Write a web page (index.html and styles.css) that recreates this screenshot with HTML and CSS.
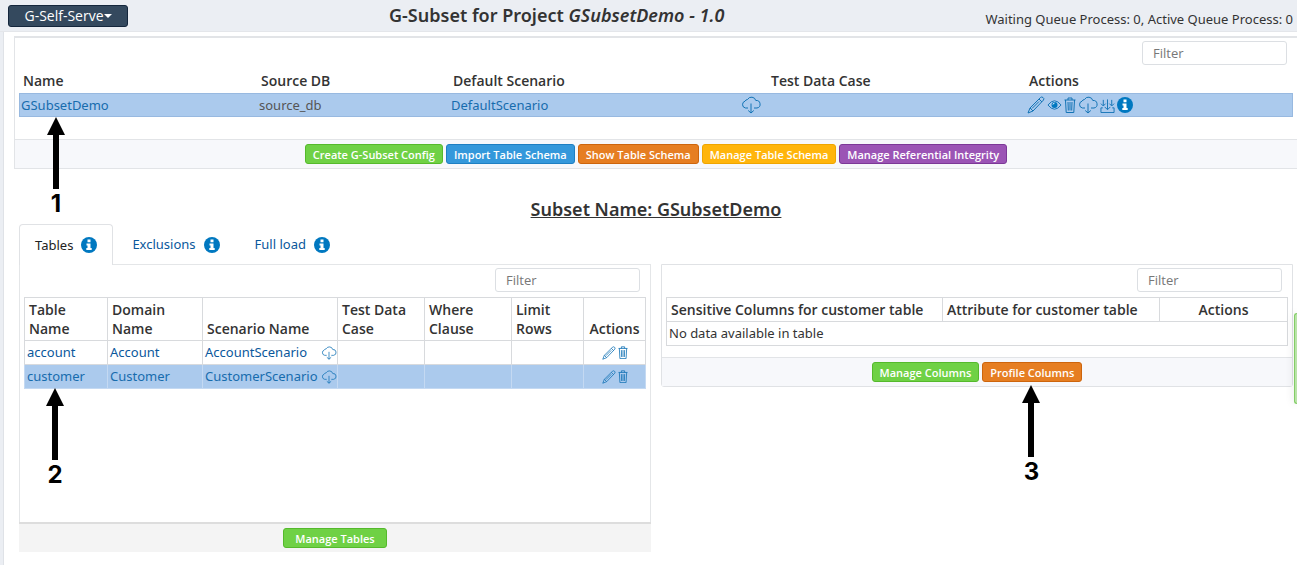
FILE: index.html
```html
<!DOCTYPE html>
<html lang="en">
<head>
    <meta charset="UTF-8">
    <meta name="viewport" content="width=device-width, initial-scale=1.0">
    <title>G-Subset</title>
    <link rel="stylesheet" href="styles.css">
</head>
<body>
    <!-- Icon sprite -->
    <svg class="sprite" aria-hidden="true">
        <symbol id="pen" viewBox="0 0 18 18">
            <path d="M1 17l2-5L13.500 1.500q1-1 2.500 0t.5 2.500L6 15zM3 12l3 3M12 3l3 3M5 12.500l7-7"/>
        </symbol>
        <symbol id="eye" viewBox="0 0 16 12">
            <path d="M1 6q7-9 14 0q-7 9-14 0z"/>
            <circle class="solid" cx="8" cy="6" r="3.200"/>
            <path class="shine" d="M6.300 5.500q.2-1.500 1.700-1.500"/>
        </symbol>
        <symbol id="trash" viewBox="0 0 12 16">
            <path d="M.5 3h11M4 3V1h4v2M1.500 3l.7 12.500h7.600L10.500 3M4 5l.3 8.500M6 5v8.500M8 5l-.3 8.500"/>
        </symbol>
        <symbol id="cloud" viewBox="0 0 20 18">
            <path d="M7 12H4.500A3.500 3.500 0 0 1 4 5.200 3 3 0 0 1 6.500 3.500 4.500 4.500 0 0 1 14.800 4.500a3.800 3.800 0 0 1 1.200 7.500H13M10 7.500V17M7.200 14.500L10 17l2.800-2.500"/>
        </symbol>
        <symbol id="tray" viewBox="0 0 16 16">
            <path d="M3 10.500H1v5h14v-5h-2M8 1.500V12M5 9.500L8 12.500l3-3M3.500 2v6M1 6l2.500 2.500L6 6M12.500 2v6M10 6l2.500 2.500L15 6"/>
        </symbol>
        <symbol id="info" viewBox="0 0 16 16">
            <circle class="solid" cx="8" cy="8" r="8"/>
            <path class="hole" d="M6.500 2.500h3v2.700h-3zM5.500 6.500h4v4.500h1.200v2H5.300v-2h1.200V8.400h-1z"/>
        </symbol>
    </svg>

    <header class="topbar">
        <button class="menu-btn" type="button">G-Self-Serve<span class="caret"></span></button>
        <h1>G-Subset for Project <em>GSubsetDemo - 1.0</em></h1>
        <span class="queue">Waiting Queue Process: 0, Active Queue Process: 0</span>
    </header>

    <main>
        <!-- Subset configs -->
        <section class="card">
            <div class="filter-row">
                <input class="filter" type="text" placeholder="Filter" aria-label="Filter configs">
            </div>
            <table class="configs">
                <thead>
                    <tr>
                        <th class="c-name">Name</th>
                        <th class="c-source">Source DB</th>
                        <th class="c-scenario">Default Scenario</th>
                        <th class="c-case">Test Data Case</th>
                        <th class="c-actions">Actions</th>
                    </tr>
                </thead>
                <tbody>
                    <tr class="selected">
                        <td>
                            <a class="marked" href="#">GSubsetDemo
                                <span class="marker"><svg viewBox="0 0 18 72"><path d="M9 0l9 18h-6v54H6V18H0z"/></svg>1</span>
                            </a>
                        </td>
                        <td>source_db</td>
                        <td><a href="#">DefaultScenario</a></td>
                        <td><a href="#" aria-label="Download case"><svg class="icon cloud"><use href="#cloud"/></svg></a></td>
                        <td>
                            <div class="icons">
                                <a href="#" aria-label="Edit"><svg class="icon pen"><use href="#pen"/></svg></a>
                                <a href="#" aria-label="View"><svg class="icon eye"><use href="#eye"/></svg></a>
                                <a href="#" aria-label="Delete"><svg class="icon trash"><use href="#trash"/></svg></a>
                                <a href="#" aria-label="Download"><svg class="icon cloud"><use href="#cloud"/></svg></a>
                                <a href="#" aria-label="Import"><svg class="icon tray"><use href="#tray"/></svg></a>
                                <a href="#" aria-label="Info"><svg class="icon info"><use href="#info"/></svg></a>
                            </div>
                        </td>
                    </tr>
                </tbody>
            </table>
            <div class="card-footer">
                <button class="btn green" type="button">Create G-Subset Config</button>
                <button class="btn blue" type="button">Import Table Schema</button>
                <button class="btn orange" type="button">Show Table Schema</button>
                <button class="btn yellow" type="button">Manage Table Schema</button>
                <button class="btn purple" type="button">Manage Referential Integrity</button>
            </div>
        </section>

        <h2>Subset Name: GSubsetDemo</h2>

        <nav class="tabs">
            <a class="tab active" href="#">Tables <svg class="icon info"><use href="#info"/></svg></a>
            <a class="tab" href="#">Exclusions <svg class="icon info"><use href="#info"/></svg></a>
            <a class="tab" href="#">Full load <svg class="icon info"><use href="#info"/></svg></a>
        </nav>

        <div class="panels">
            <!-- Tables in the subset -->
            <section class="panel tables-panel">
                <div class="panel-body">
                    <div class="filter-row">
                        <input class="filter" type="text" placeholder="Filter" aria-label="Filter tables">
                    </div>
                    <table class="grid">
                        <thead>
                            <tr>
                                <th class="t-table">Table Name</th>
                                <th class="t-domain">Domain Name</th>
                                <th class="t-scenario">Scenario Name</th>
                                <th class="t-case">Test Data Case</th>
                                <th class="t-where">Where Clause</th>
                                <th class="t-limit">Limit Rows</th>
                                <th class="t-actions">Actions</th>
                            </tr>
                        </thead>
                        <tbody>
                            <tr>
                                <td><a href="#">account</a></td>
                                <td><a href="#">Account</a></td>
                                <td>
                                    <div class="scenario">
                                        <a href="#">AccountScenario</a>
                                        <a href="#" aria-label="Download"><svg class="icon cloud small"><use href="#cloud"/></svg></a>
                                    </div>
                                </td>
                                <td></td>
                                <td></td>
                                <td></td>
                                <td>
                                    <div class="icons centered">
                                        <a href="#" aria-label="Edit"><svg class="icon pen small"><use href="#pen"/></svg></a>
                                        <a href="#" aria-label="Delete"><svg class="icon trash small"><use href="#trash"/></svg></a>
                                    </div>
                                </td>
                            </tr>
                            <tr class="selected">
                                <td>
                                    <a class="marked" href="#">customer
                                        <span class="marker"><svg viewBox="0 0 18 72"><path d="M9 0l9 18h-6v54H6V18H0z"/></svg>2</span>
                                    </a>
                                </td>
                                <td><a href="#">Customer</a></td>
                                <td>
                                    <div class="scenario">
                                        <a href="#">CustomerScenario</a>
                                        <a href="#" aria-label="Download"><svg class="icon cloud small"><use href="#cloud"/></svg></a>
                                    </div>
                                </td>
                                <td></td>
                                <td></td>
                                <td></td>
                                <td>
                                    <div class="icons centered">
                                        <a href="#" aria-label="Edit"><svg class="icon pen small"><use href="#pen"/></svg></a>
                                        <a href="#" aria-label="Delete"><svg class="icon trash small"><use href="#trash"/></svg></a>
                                    </div>
                                </td>
                            </tr>
                        </tbody>
                    </table>
                </div>
                <div class="panel-footer gray">
                    <button class="btn green wide" type="button">Manage Tables</button>
                </div>
            </section>

            <!-- Sensitive columns of the selected table -->
            <section class="panel columns-panel">
                <div class="panel-body">
                    <div class="filter-row">
                        <input class="filter" type="text" placeholder="Filter" aria-label="Filter columns">
                    </div>
                    <table class="grid">
                        <thead>
                            <tr>
                                <th class="s-column">Sensitive Columns for customer table</th>
                                <th class="s-attribute">Attribute for customer table</th>
                                <th class="s-actions">Actions</th>
                            </tr>
                        </thead>
                        <tbody>
                            <tr>
                                <td colspan="3">No data available in table</td>
                            </tr>
                        </tbody>
                    </table>
                </div>
                <div class="panel-footer">
                    <button class="btn green" type="button">Manage Columns</button>
                    <div class="marked">
                        <button class="btn orange" type="button">Profile Columns</button>
                        <span class="marker"><svg viewBox="0 0 18 72"><path d="M9 0l9 18h-6v54H6V18H0z"/></svg>3</span>
                    </div>
                </div>
            </section>
        </div>
    </main>
    <div class="side-handle"></div>
</body>
</html>
```
FILE: styles.css
```css
* {
    box-sizing: border-box;
}

body {
    margin: 0;
    background: #ebeef3;
    color: #333;
    font-family: "Noto Sans", "Open Sans", sans-serif;
    font-size: 13px;
    line-height: 19px;
    overflow: hidden;
}

a {
    color: #0a589c;
    text-decoration: none;
}

.sprite {
    display: none;
}

/* Top bar */
.topbar {
    display: flex;
    align-items: center;
    height: 32px;
    padding: 0 4px 0 8px;
    border-bottom: 1px solid #e4e6ea;
}

.menu-btn {
    display: flex;
    align-items: center;
    justify-content: center;
    width: 120px;
    height: 22px;
    padding: 0;
    border: 1px solid #14263c;
    border-radius: 3px;
    background: #34495e;
    color: #fff;
    font: 14px "Open Sans", sans-serif;
}

.caret {
    border: 4px solid transparent;
    border-top-color: #fff;
    border-bottom: 0;
}

h1 {
    flex: 1;
    margin: 0;
    font-size: 18px;
    font-weight: 600;
    text-align: center;
}

.queue {
    padding-top: 8px;
}

/* Content */
main {
    min-height: calc(100vh - 32px);
    margin-left: 3px;
    padding: 4px 4px 12px 15px;
    border-left: 1px solid #dfe2e7;
    background: #fff;
}

.card {
    margin: 0 -4px 0 -5px;
    border: 1px solid #e2e4e7;
    border-top-width: 2px;
    border-right: 0;
}

.filter-row {
    display: flex;
    justify-content: flex-end;
    padding: 3px 6px 4px;
}

.card .filter-row {
    padding-right: 10px;
}

.filter {
    width: 145px;
    height: 24px;
    padding: 0 10px;
    border: 1px solid #dcdfe3;
    border-radius: 3px;
    background: #fff;
    font: 13px "Open Sans", sans-serif;
}

.filter::placeholder {
    color: #777;
}

table {
    width: 100%;
    border-collapse: collapse;
    table-layout: fixed;
}

th {
    font-family: "Open Sans", sans-serif;
    font-size: 14px;
    font-weight: 600;
    text-align: left;
    vertical-align: bottom;
}

td {
    height: 24px;
    padding: 0 2px;
}

.selected {
    background: #abcaed;
    color: #555;
}

.selected a {
    color: #176cad;
}

.configs {
    width: calc(100% - 8px);
    margin: 0 4px 22px;
}

.configs th {
    padding: 2px 4px 3px;
}

.configs .selected {
    outline: 1px solid #98b9e0;
    outline-offset: -1px;
}

.c-name { width: 238px; }
.c-source { width: 192px; }
.c-scenario { width: 290px; }
.c-case { width: 286px; }
.c-actions { width: 268px; }

.configs .c-case {
    padding-left: 32px;
}

.card-footer,
.panel-footer {
    display: flex;
    align-items: center;
    justify-content: center;
    gap: 3px;
    height: 29px;
    border-top: 1px solid #e2e4e7;
    background: #f7f8fb;
}

h2 {
    margin: 29px 0 3px;
    font-size: 18px;
    font-weight: 600;
    line-height: 23px;
    text-align: center;
    text-decoration: underline;
}

/* Buttons */
.btn {
    height: 20px;
    padding: 0 7px;
    border: 1px solid;
    border-radius: 3px;
    color: #fff;
    font: 600 11px "Open Sans", sans-serif;
}

.wide { padding: 0 11px; }
.green { background: #6fd145; border-color: #55b92c; }
.blue { background: #3498db; border-color: #1e7fc2; }
.orange { background: #e67e22; border-color: #cd650d; }
.yellow { background: #ffb50c; border-color: #efa500; }
.purple { background: #9b54b5; border-color: #7c3897; }

/* Tabs */
.tabs {
    display: flex;
}

.tab {
    display: flex;
    align-items: center;
    gap: 8px;
    height: 40px;
    padding: 0 15px;
    border: 1px solid transparent;
    border-bottom: 0;
    border-radius: 4px 4px 0 0;
}

.tab + .tab {
    padding-left: 18px;
}

.tab.active {
    z-index: 1;
    height: 41px;
    margin-bottom: -1px;
    border-color: #e0e2e5;
    background: #fff;
    color: #222;
}

/* Panels */
.panels {
    display: grid;
    grid-template-columns: 1fr 1fr;
    gap: 10px;
    align-items: start;
}

.panel {
    border: 1px solid #e0e2e5;
    border-radius: 0 0 3px 3px;
}

.panel-body {
    padding: 0 4px 11px;
}

.panel-body .filter-row {
    padding-bottom: 5px;
}

.tables-panel {
    border-bottom: 0;
    border-color: #e4e6e8;
}

.tables-panel .panel-body {
    min-height: 257px;
}

.panel-footer.gray {
    margin: 0 -1px;
    height: 30px;
    border-top: 2px solid #ddd;
    background: #f4f4f4;
}

.grid th,
.grid td {
    border: 1px solid #d8dadd;
}

.grid th {
    padding: 2px 4px;
}

.grid .selected td {
    border-color: #c4d9f2;
}

.t-table { width: 83px; }
.t-domain { width: 95px; }
.t-scenario { width: 135px; }
.t-case { width: 87px; }
.t-where { width: 87px; }
.t-limit { width: 72px; }
.t-actions { width: 62px; }

.s-column { width: 276px; }
.s-attribute { width: 217px; }
.s-actions { width: 128px; }

.grid .t-actions,
.grid .s-actions {
    padding: 2px 0;
    text-align: center;
}

.scenario {
    display: flex;
    align-items: center;
    justify-content: space-between;
    margin-right: -2px;
}

/* Icons */
.icon {
    display: block;
    fill: none;
    stroke: #1273b5;
    stroke-width: 1;
}

.solid { fill: #0078c0; stroke: none; }
.hole { fill: #fff; stroke: none; }
.shine { stroke: #fff; stroke-width: 1; }

.icons {
    display: flex;
    align-items: center;
    gap: 2px;
}

.centered { justify-content: center; }

.pen { width: 18px; height: 18px; }
.eye { width: 15px; height: 12px; }
.trash { width: 12px; height: 16px; }
.cloud { width: 20px; height: 18px; }
.tray { width: 15px; height: 15px; }
.info { width: 16px; height: 16px; }
.pen.small { width: 14px; height: 14px; }
.trash.small { width: 10px; height: 13px; }
.cloud.small { width: 16px; height: 14px; }

/* Numbered pointers laid over the page */
.marked {
    position: relative;
}

.marker {
    position: absolute;
    top: 100%;
    left: 50%;
    z-index: 2;
    width: 18px;
    margin: 3px 0 0 -10px;
    color: #000;
    font: bold 24px/30px Inter, sans-serif;
    text-align: center;
}

.marker svg {
    display: block;
    width: 18px;
    height: 72px;
}

.configs .marker {
    margin-left: -18px;
}

/* Collapsed side drawer */
.side-handle {
    position: fixed;
    top: 313px;
    right: 0;
    width: 3px;
    height: 91px;
    border: 1px solid #83cd66;
    border-right: 0;
    border-radius: 4px 0 0 4px;
    background: #b9e3a8;
    box-shadow: 0 0 8px rgba(0, 0, 0, 0.15);
}
```
